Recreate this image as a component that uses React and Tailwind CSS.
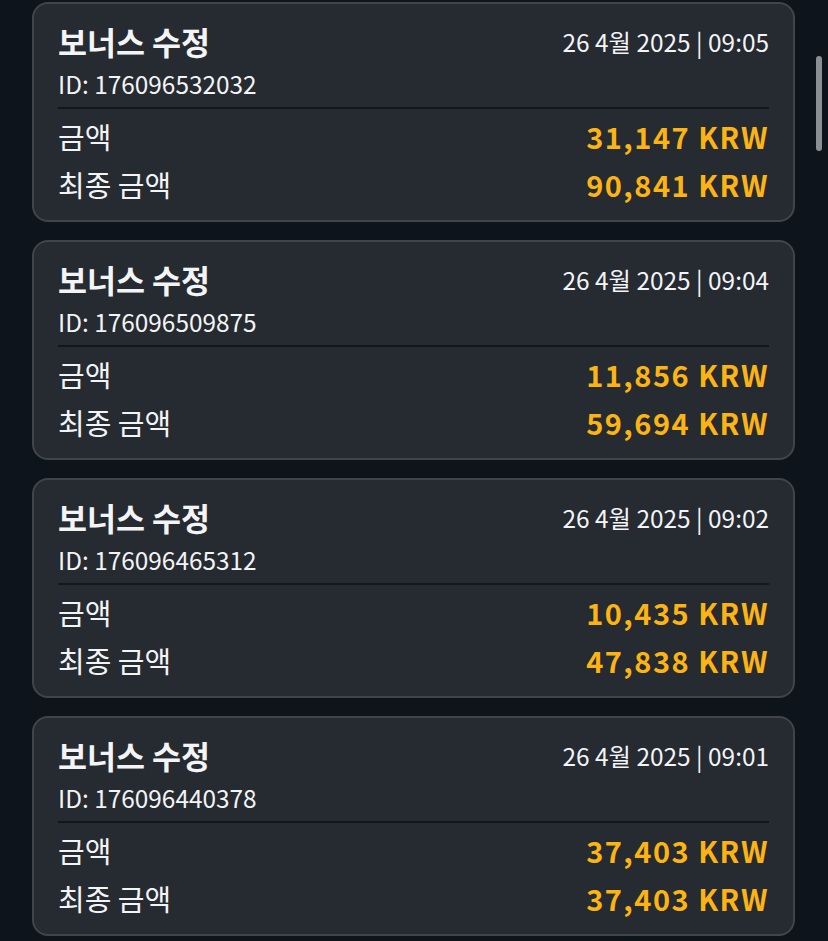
import React from "react";

const items = [
  { id: "176096532032", time: "09:05", amount: "31,147", total: "90,841" },
  { id: "176096509875", time: "09:04", amount: "11,856", total: "59,694" },
  { id: "176096465312", time: "09:02", amount: "10,435", total: "47,838" },
  { id: "176096440378", time: "09:01", amount: "37,403", total: "37,403" },
];

const font = { fontFamily: '"Noto Sans CJK KR", "Noto Sans", sans-serif' };

const BonusCard = ({ item }) => (
  <div className="w-[763px] rounded-[16px] border-2 border-[#41454a] bg-[#262a31] px-[24px] pt-[18px] pb-[11px] text-[#f3f4f5]">
    <div className="flex h-[40px] items-center justify-between">
      <span className="text-[31.5px] font-bold">보너스 수정</span>
      <span className="text-[24.4px]">26 4월 2025 | {item.time}</span>
    </div>
    <div className="mt-[4px] flex h-[36px] items-center text-[24.4px]">ID: {item.id}</div>
    <div className="mt-[5px] h-[2px] bg-[#13171c]" />
    <div className="mt-[4px] flex h-[48px] items-center justify-between">
      <span className="text-[29px]">금액</span>
      <span className="text-[29px] font-bold tracking-[1.5px] text-[#fbb414]">{item.amount} KRW</span>
    </div>
    <div className="flex h-[48px] items-center justify-between">
      <span className="text-[29px]">최종 금액</span>
      <span className="text-[29px] font-bold tracking-[1.5px] text-[#fbb414]">{item.total} KRW</span>
    </div>
  </div>
);

export default function App() {
  return (
    <div className="relative h-[941px] overflow-hidden bg-[#0e141b]" style={font}>
      <div className="flex flex-col gap-[18px] pl-[32px] pt-[2px]">
        {items.map((item) => (
          <BonusCard key={item.id} item={item} />
        ))}
      </div>
      <div className="absolute left-[816px] top-[56px] h-[95px] w-[6px] rounded-full bg-[#8a8f94]" />
    </div>
  );
}
